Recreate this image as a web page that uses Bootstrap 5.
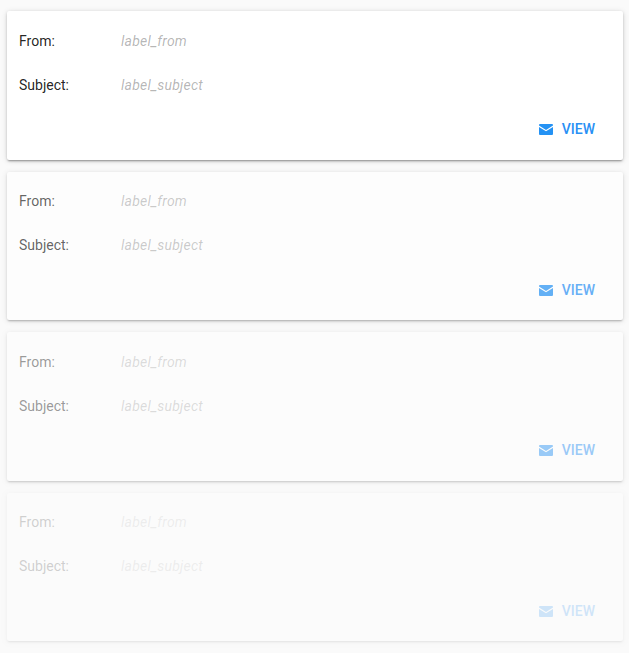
<!DOCTYPE html>
<html lang="en">
<head>
    <meta charset="UTF-8">
    <meta name="viewport" content="width=device-width, initial-scale=1">
    <title>Messages</title>
    <link rel="stylesheet" href="https://cdn.jsdelivr.net/npm/bootstrap@5.3.0/dist/css/bootstrap.min.css">
    <style>
        body {
            background-color: #fafafa;
            font-family: Roboto, "Liberation Sans", sans-serif;
            font-size: 14px;
            padding: 11px 6px 0 7px;
        }
        .msg-card {
            height: 148.5px;
            margin-bottom: 12px;
            padding: 8px 12px 0;
            border: 0;
            border-radius: 2px;
            box-shadow: 0 2px 2px -1px rgba(0,0,0,.3), 0 1px 3px 0 rgba(0,0,0,.14), 0 1px 6px 0 rgba(0,0,0,.12);
        }
        .fade-2 { opacity: .7; }
        .fade-3 { opacity: .45; }
        .fade-4 { opacity: .2; }
        .msg-row {
            height: 44px;
            color: rgba(0,0,0,.87);
        }
        .msg-label {
            width: 102px;
        }
        .msg-value {
            color: rgba(0,0,0,.3);
            font-style: italic;
            letter-spacing: .22px;
        }
        .msg-action {
            height: 45px;
            padding-right: 16px;
        }
        .view-btn {
            color: #2890f5;
            font-weight: 500;
            text-decoration: none;
            gap: 9px;
        }
        .view-btn svg {
            width: 14px;
            height: 11px;
            fill: #2492f4;
        }
    </style>
</head>
<body>

<div id="msg-list"></div>

<script>
const fades = ['', 'fade-2', 'fade-3', 'fade-4'];
const list = document.getElementById('msg-list');
fades.forEach(fade => {
    list.innerHTML += `
    <div class="card msg-card ${fade}">
        <div class="d-flex align-items-center msg-row">
            <div class="msg-label">From:</div>
            <div class="msg-value">label_from</div>
        </div>
        <div class="d-flex align-items-center msg-row">
            <div class="msg-label">Subject:</div>
            <div class="msg-value">label_subject</div>
        </div>
        <div class="d-flex align-items-center justify-content-end msg-action">
            <a class="d-flex align-items-center view-btn" href="#">
                <svg viewBox="0 0 14 11"><path d="M1 0h12a1 1 0 0 1 1 1v.6L7 6 0 1.6V1a1 1 0 0 1 1-1z"/><path d="M0 2.9V10a1 1 0 0 0 1 1h12a1 1 0 0 0 1-1V2.9L7 7.3z"/></svg>
                VIEW
            </a>
        </div>
    </div>`;
});
</script>
</body>
</html>
